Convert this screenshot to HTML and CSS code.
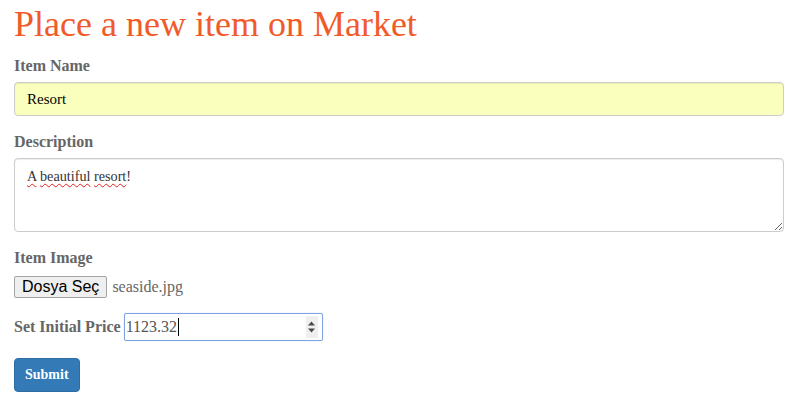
FILE: index.html
```html
<!DOCTYPE html>
<html>
<head>
<meta charset="utf-8">
<link rel="stylesheet" href="styles.css">
</head>
<body>
<div class="page">
  <h1 class="title">Place a new item on Market</h1>
  <form class="form">
    <div class="group">
      <label class="label">Item Name</label>
      <input class="control autofill" type="text" value="Resort">
    </div>
    <div class="group">
      <label class="label">Description</label>
      <div class="control area"><span class="typo">A</span> <span class="typo">beautiful</span> <span class="typo">resort</span>!</div>
    </div>
    <div class="group group-file">
      <label class="label">Item Image</label>
      <div class="file">
        <span class="file-btn">Dosya Seç</span>
        <span class="file-name">seaside.jpg</span>
      </div>
    </div>
    <div class="inline">
      <label class="label">Set Initial Price</label>
      <div class="price">
        <span class="price-val">1123.32</span><span class="caret"></span>
        <span class="spin">
          <svg width="9" height="16" viewBox="0 0 9 16"><path d="M1 6.5 L4.5 2.5 L8 6.5 Z" fill="#4a4a4a"/><path d="M1 9.5 L4.5 13.5 L8 9.5 Z" fill="#4a4a4a"/></svg>
        </span>
      </div>
    </div>
    <button class="submit" type="button">Submit</button>
  </form>
</div>
</body>
</html>
```
FILE: styles.css
```css
* { box-sizing: border-box; }
html, body { margin: 0; padding: 0; background: #fff; }
body { font-family: "Liberation Serif", "Times New Roman", serif; }
.page { padding: 0 28px 0 14px; }
.title {
  margin: 0;
  padding-top: 4px;
  font-size: 36px;
  font-weight: normal;
  line-height: 40px;
  color: #f15a29;
}
.form { margin-top: 12px; }
.group { margin-bottom: 16px; }
.label {
  display: block;
  font-size: 16px;
  font-weight: bold;
  color: #666;
  line-height: 20px;
  margin-bottom: 6px;
}
.control {
  display: block;
  width: 100%;
  height: 34px;
  padding: 6px 12px;
  font-family: "Liberation Serif", "Times New Roman", serif;
  font-size: 15px;
  color: #555;
  background: #fff;
  border: 1px solid #ccc;
  border-radius: 4px;
  box-shadow: inset 0 1px 1px rgba(0,0,0,.075);
  outline: none;
}
.autofill { background: #faffbd; color: #000; }
.area {
  height: 74px;
  resize: vertical;
  overflow: auto;
  color: #333;
  font-size: 14.2px;
  line-height: 20px;
  padding-top: 7px;
}
.typo {
  text-decoration: underline wavy #e02020;
  text-decoration-thickness: 1px;
  text-underline-offset: 2px;
  text-decoration-skip-ink: none;
}
.group-file { margin-bottom: 15px; }
.group-file .label { margin-bottom: 8px; }
.file { display: flex; align-items: center; height: 22px; }
.file-btn {
  font-family: "Liberation Sans", Arial, sans-serif;
  font-size: 16px;
  color: #000;
  background: #efefef;
  border: 1px solid #a3a3a3;
  border-radius: 2px;
  height: 22px;
  line-height: 20px;
  padding: 0 7px;
}
.file-name { font-size: 16px; color: #666; margin-left: 5px; }
.inline { display: flex; align-items: center; margin-bottom: 17px; }
.inline .label { margin: 0 3px 0 0; }
.price {
  display: flex;
  align-items: center;
  width: 199px;
  height: 28px;
  border: 1px solid #7ea3e3;
  border-radius: 2px;
  box-shadow: 0 0 1px #9ab8ef;
  padding: 0 4px 0 1px;
  font-size: 16px;
  color: #555;
}
.caret { width: 1px; height: 18px; background: #000; margin-left: 1px; }
.spin {
  margin-left: auto;
  width: 12px;
  height: 22px;
  background: #efefef;
  display: flex;
  align-items: center;
  justify-content: center;
}
.submit {
  display: block;
  height: 34px;
  padding: 0 10px;
  font-family: "Liberation Serif", "Times New Roman", serif;
  font-size: 14px;
  font-weight: bold;
  color: #fff;
  background: #337ab7;
  border: 1px solid #2e6da4;
  border-radius: 4px;
}
```
